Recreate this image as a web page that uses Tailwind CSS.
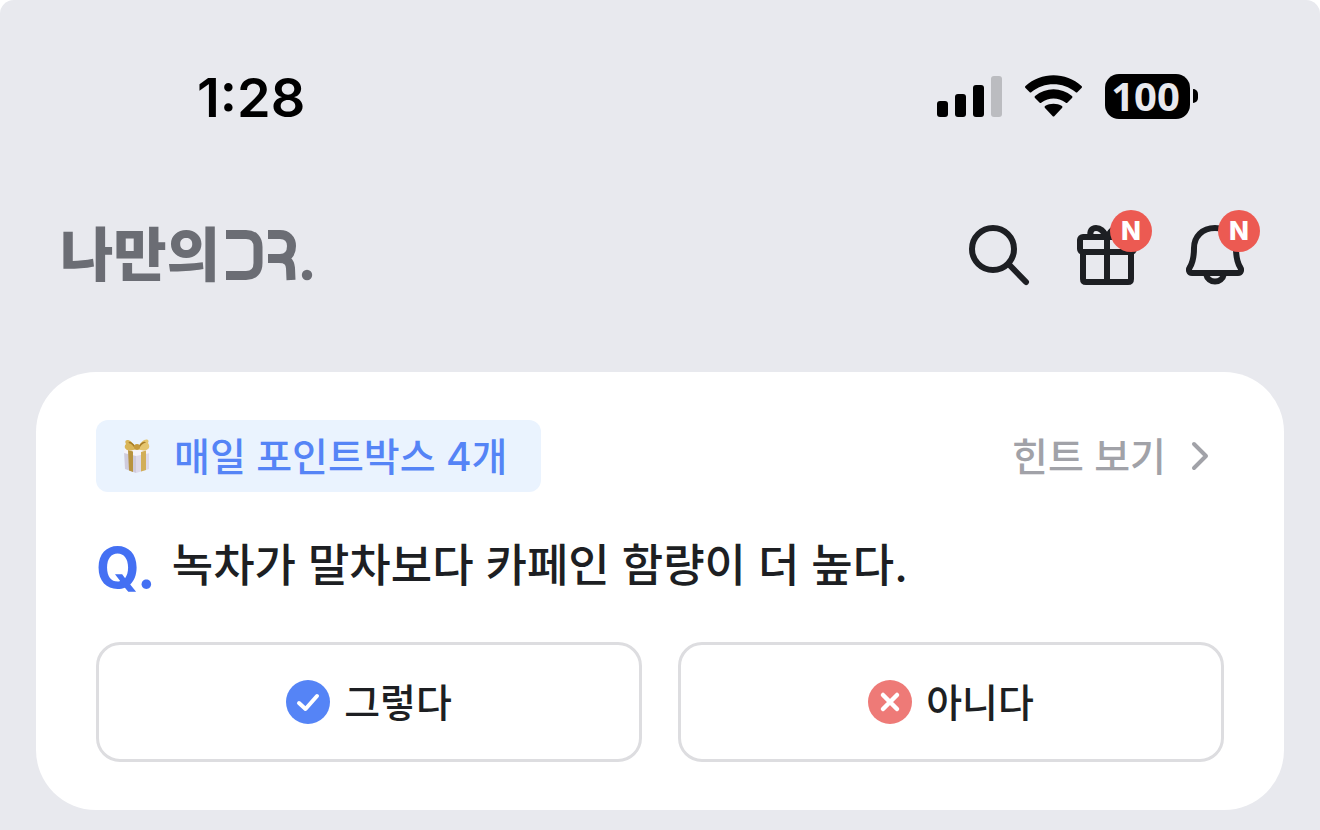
<!DOCTYPE html>
<html lang="ko">
<head>
<meta charset="utf-8">
<meta name="viewport" content="width=device-width, initial-scale=1">
<title>나만의 DR.</title>
<script src="https://cdn.jsdelivr.net/npm/@tailwindcss/browser@4"></script>
</head>
<body class="bg-white font-[Inter,'Noto_Sans_CJK_KR',sans-serif] text-[#1d1f23]">
<div class="min-h-screen rounded-t-[14px] bg-[#e8e9ee] pt-[72px] pb-5">

  <div class="flex h-12 items-center justify-between pr-[122px] pl-[197px] text-black">
    <time class="pt-1 text-[54px] leading-[48px] font-semibold">1:28</time>
    <div class="flex items-center gap-[22px]">
      <svg class="h-[41px] w-[66px]" viewBox="937 76 66 41" role="img" aria-label="신호 세기">
        <rect x="937" y="101" width="11" height="16" rx="3"/>
        <rect x="955" y="94" width="11" height="23" rx="3"/>
        <rect x="973" y="85" width="11" height="32" rx="3"/>
        <rect x="991" y="76" width="11" height="41" rx="3" fill="#bbbcc0"/>
      </svg>
      <svg class="h-[42px] w-[58px]" viewBox="1025 75 58 42" role="img" aria-label="와이파이">
        <path d="M1025.500 88 Q1024.500 87 1025.500 86 C1041 71.500 1066 71.500 1081.500 86 Q1082.500 87 1081.500 88 L1077.500 92 Q1076.500 93 1075.500 92 C1063 81.500 1044 81.500 1031.500 92 Q1030.500 93 1029.500 92 Z"/>
        <path d="M1035 98 Q1034 97 1035 96 C1046 87 1061 87 1072 96 Q1073 97 1072 98 L1067.500 102.500 Q1066.500 103.500 1065.500 102.500 C1058 97 1049 97 1041.500 102.500 Q1040.500 103.500 1039.500 102.500 Z"/>
        <path d="M1045 108 Q1044 107 1045 106 C1050 103 1057 103 1062 106 Q1063 107 1062 108 L1054.500 116 Q1053.500 117 1052.500 116 Z"/>
      </svg>
      <div class="flex items-center gap-[3px]">
        <span class="flex h-[45px] w-[85px] items-center justify-center rounded-[14px] bg-black pr-1 font-['Open_Sans',sans-serif] text-[40px] leading-none font-bold text-[#e8e9ee]">100</span>
        <span class="h-[14px] w-[5px] rounded-r-full bg-black"></span>
      </div>
    </div>
  </div>

  <header class="mt-[90px] flex h-20 items-start justify-between px-[60px]">
    <a href="#" class="flex items-center pt-[13px] text-[#6b6d74]" aria-label="나만의 DR.">
      <span class="text-[58px] leading-[64px] font-black">나만의</span>
      <svg class="ml-[5px] h-[56px] w-[90px]" viewBox="225 227 90 56" fill="none" stroke="currentColor" stroke-width="9" aria-hidden="true">
        <path d="M226 234.500 H246 C254 234.500 258 239 258 247 V263 C258 271 254 275.500 246 275.500 H226"/>
        <path d="M268 234.500 H280 C287 234.500 291.500 239 291.500 246 C291.500 254 287 258.500 280 258.500 H268 M279 258.500 C288 258.500 290 263 290.500 268 L291 280"/>
        <circle cx="307" cy="275" r="5.200" fill="currentColor" stroke="none"/>
      </svg>
    </a>
    <nav class="flex items-start gap-11 pr-[14px]">
      <button type="button" class="mt-[13px]" aria-label="검색">
        <svg class="h-[64px] w-[64px]" viewBox="967 223 64 64" fill="none" stroke="currentColor" stroke-width="6" stroke-linecap="round">
          <circle cx="993" cy="249" r="21"/><path d="M1009 264.500 L1026 282"/>
        </svg>
      </button>
      <button type="button" class="relative mt-[13px]" aria-label="선물, 새 알림">
        <svg class="h-[64px] w-[65px]" viewBox="1075 223 65 64" fill="none" stroke="currentColor" stroke-width="6" stroke-linejoin="round">
          <rect x="1080" y="237" width="54" height="15" rx="3"/>
          <path d="M1083 252 V279 Q1083 282 1086 282 H1128 Q1131 282 1131 279 V252 M1107 236 V282"/>
          <path d="M1091 237 C1089 231 1092 228 1096 228 C1102 228 1104 233 1107 237 C1110 233 1112 228 1118 228 C1122 228 1125 231 1123 237"/>
        </svg>
        <span class="absolute -top-[13px] left-[35px] flex h-[42px] w-[42px] items-center justify-center rounded-full bg-[#ec5a52] font-[Inter,sans-serif] text-[26px] leading-none font-extrabold text-white">N</span>
      </button>
      <button type="button" class="relative mt-[13px]" aria-label="알림, 새 알림">
        <svg class="h-[64px] w-[62px]" viewBox="1184 223 62 64" fill="none" stroke="currentColor" stroke-width="6" stroke-linejoin="round">
          <path d="M1215 228 C1202 228 1194 237 1194 248 C1194 258 1193 262 1190 267 C1188 270 1189 273 1192 273 H1238 C1241 273 1242 270 1240 267 C1237 262 1236 258 1236 248 C1236 237 1228 228 1215 228 Z"/>
          <path d="M1206 274 C1208 284 1222 284 1224 274"/>
        </svg>
        <span class="absolute -top-[13px] left-[34px] flex h-[42px] w-[42px] items-center justify-center rounded-full bg-[#ec5a52] font-[Inter,sans-serif] text-[26px] leading-none font-extrabold text-white">N</span>
      </button>
    </nav>
  </header>

  <main class="mx-9 mt-[82px] rounded-[60px] bg-white px-[60px] py-12">
    <div class="flex items-center justify-between">
      <div class="flex h-[72px] items-center gap-5 rounded-xl bg-[#eaf3fe] pr-[34px] pl-6">
        <svg class="h-9 w-[34px]" viewBox="0 0 34 36" aria-hidden="true">
          <path d="M4 13 L16 16 V35 L5 31 Z" fill="#cfcbdc"/>
          <path d="M16 16 L29 13 V31 L16 35 Z" fill="#dedaea"/>
          <path d="M4 11 L17 8 L30 11 V15 L16 18 L4 15 Z" fill="#f5f3fa"/>
          <path d="M8 12 L13 13.500 V34 L9 32.500 Z" fill="#b8933f"/>
          <path d="M21 14 L26 12.500 V32 L21 33.500 Z" fill="#d2ae58"/>
          <path d="M16 11 C11 -1 3 1 6 6 C2 10 8 15 16 11 Z" fill="#d9b558"/>
          <path d="M18 11 C21 -1 31 0 28 5 C32 10 26 15 18 11 Z" fill="#e5c66f"/>
          <path d="M15 9 C12 5 10 4 9 5 M19 9 C22 4 25 4 25 5" fill="none" stroke="#a77c26" stroke-width="1.500"/>
          <circle cx="17" cy="9" r="3" fill="#c59a3d"/>
        </svg>
        <span class="text-[39px] leading-none font-medium text-[#5584f6]">매일 포인트박스 4개</span>
      </div>
      <a href="#" class="flex items-center gap-6 pr-[14px] text-[#a1a2a8]">
        <span class="text-[39px] leading-none font-medium">힌트 보기</span>
        <svg class="h-8 w-5" viewBox="0 0 20 32" fill="none" stroke="currentColor" stroke-width="4" stroke-linecap="round" stroke-linejoin="round" aria-hidden="true"><path d="M4 4 L16 16 L4 28"/></svg>
      </a>
    </div>

    <h1 class="mt-10 flex h-[72px] items-center gap-4 text-[45px] leading-none font-medium">
      <span class="text-[56px] font-bold text-[#4470f3]">Q.</span>
      <span class="pb-[6px]">녹차가 말차보다 카페인 함량이 더 높다.</span>
    </h1>

    <div class="mt-[38px] grid grid-cols-2 gap-9">
      <button type="button" class="flex h-[120px] items-center justify-center gap-[14px] rounded-3xl border-[3px] border-[#dddde0] text-[39px] leading-none font-medium">
        <svg class="h-11 w-11" viewBox="0 0 44 44" fill="none" aria-hidden="true"><circle cx="22" cy="22" r="22" fill="#5584f6"/><path d="M13 23 L19.500 29 L31 16" stroke="#fff" stroke-width="4" stroke-linecap="round" stroke-linejoin="round"/></svg>
        그렇다
      </button>
      <button type="button" class="flex h-[120px] items-center justify-center gap-[14px] rounded-3xl border-[3px] border-[#dddde0] text-[39px] leading-none font-medium">
        <svg class="h-11 w-11" viewBox="0 0 44 44" fill="none" aria-hidden="true"><circle cx="22" cy="22" r="22" fill="#ee7a77"/><path d="M15 15 L29 29 M29 15 L15 29" stroke="#fff" stroke-width="4.500" stroke-linecap="round"/></svg>
        아니다
      </button>
    </div>
  </main>
</div>
</body>
</html>
